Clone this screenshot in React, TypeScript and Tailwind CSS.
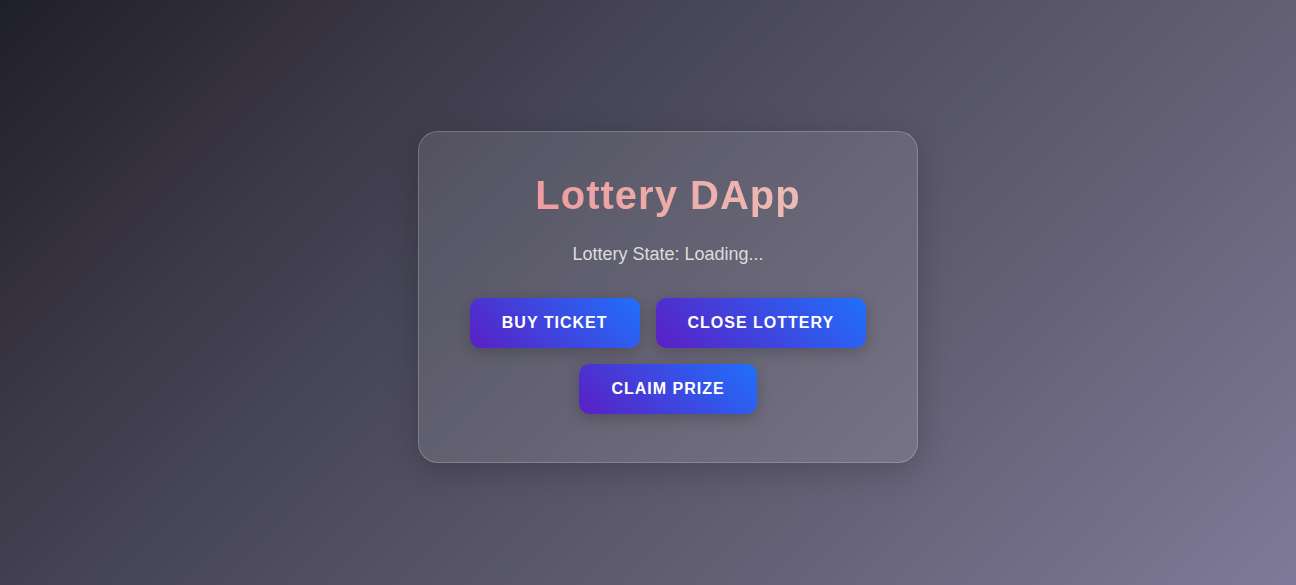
const actions = ["Buy Ticket", "Close Lottery", "Claim Prize"];

export default function App() {
  return (
    <div className="flex min-h-screen items-center justify-center bg-[linear-gradient(135deg,#1f1f2b,#35313f_17%,#474657_37%,#625f73_68%,#7f7a99)] pt-2 pl-10 font-['Liberation_Sans',Arial,sans-serif]">
      <main className="w-full max-w-[500px] rounded-[20px] border border-white/20 bg-white/10 px-8 pt-10 pb-12 text-center shadow-[0_8px_32px_rgba(0,0,0,0.2)]">
        <h1 className="mb-6 bg-[linear-gradient(90deg,#ff9a9e,#fad0c4)] bg-clip-text text-[40px] leading-[46px] font-bold tracking-[1px] text-transparent opacity-90">
          Lottery DApp
        </h1>
        <p className="mb-8 text-lg leading-6 text-[#dcdcdc]">Lottery State: Loading...</p>
        <div className="flex flex-wrap justify-center gap-4">
          {actions.map((label) => (
            <button
              key={label}
              type="button"
              className="h-[50px] rounded-[10px] bg-[linear-gradient(45deg,#5a1fc4,#2070fc)] px-8 text-base font-bold tracking-[1px] text-white uppercase shadow-[0_4px_15px_rgba(0,0,0,0.2)]"
            >
              {label}
            </button>
          ))}
        </div>
      </main>
    </div>
  );
}
